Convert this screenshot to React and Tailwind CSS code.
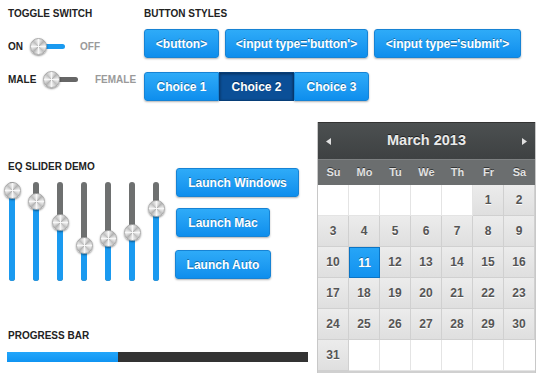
import React from "react";

const label = "text-[10px] font-bold leading-[12px] text-[#222]";
const knob =
  "w-[17px] h-[17px] rounded-full border border-[#a8a8a8] bg-[conic-gradient(#f7f7f7,#b3b3b3,#f7f7f7,#bfbfbf,#f7f7f7,#b3b3b3,#f7f7f7,#bfbfbf,#f7f7f7)] shadow-[0_1px_2px_rgba(0,0,0,0.45)]";
const btn =
  "h-[29px] rounded-[3px] border border-[#1783d4] bg-linear-to-b from-[#2eabf8] to-[#0d8eed] text-white text-[12px] font-bold leading-none [text-shadow:0_-1px_0_rgba(0,0,0,0.35)] shadow-[0_1px_2px_rgba(0,0,0,0.3)] flex items-center justify-center";

function Toggle({ on }) {
  return (
    <div className="relative w-[35px] h-[17px]">
      <div
        className={
          "absolute left-[8px] right-0 top-[6px] h-[5px] rounded-full " +
          (on ? "bg-[#1a9af0]" : "bg-[#666]")
        }
      />
      <div className={"absolute left-0 top-0 " + knob} />
    </div>
  );
}

const sliders = [8, 19, 40, 63, 56, 50, 26];

function Slider({ pos }) {
  return (
    <div className="relative w-[18px] h-[99px]">
      <div className="absolute left-[6px] w-[6px] top-0 bottom-0 rounded-full bg-[#6e7070]" />
      <div
        className="absolute left-[6px] w-[6px] bottom-0 rounded-b-full bg-[#1a9af0]"
        style={{ top: pos + "px" }}
      />
      <div className={"absolute left-[1px] " + knob} style={{ top: pos - 8 + "px" }} />
    </div>
  );
}

const days = [];
for (let i = 0; i < 5; i++) days.push(null);
for (let d = 1; d <= 31; d++) days.push(d);
while (days.length < 42) days.push(null);

function Arrow({ dir }) {
  return (
    <svg width="5" height="7" viewBox="0 0 5 7">
      {dir === "l" ? (
        <polygon points="5,0 5,7 0,3.5" fill="#e0e0e0" />
      ) : (
        <polygon points="0,0 0,7 5,3.5" fill="#e0e0e0" />
      )}
    </svg>
  );
}

export default function App() {
  return (
    <div className="w-[536px] h-[382px] bg-white overflow-hidden font-['Liberation_Sans',Arial,sans-serif]">
      {/* top */}
      <div className="flex h-[122px]">
        <div className="w-[144px] pl-[8px] pt-[8px]">
          <div className={label}>TOGGLE SWITCH</div>
          <div className="flex items-center mt-[18px] h-[17px]">
            <span className={label + " w-[14px]"}>ON</span>
            <div className="ml-[8px]">
              <Toggle on />
            </div>
            <span className="text-[10px] font-bold text-[#9a9a9a] ml-[15px]">OFF</span>
          </div>
          <div className="flex items-center mt-[16px] h-[17px]">
            <span className={label + " w-[27px]"}>MALE</span>
            <div className="ml-[8px]">
              <Toggle />
            </div>
            <span className="text-[10px] font-bold text-[#9a9a9a] ml-[17px]">FEMALE</span>
          </div>
        </div>
        <div className="pt-[8px]">
          <div className={label}>BUTTON STYLES</div>
          <div className="flex gap-[6px] mt-[9px]">
            <button className={btn + " w-[75px]"}>&lt;button&gt;</button>
            <button className={btn + " w-[143px]"}>&lt;input type='button'&gt;</button>
            <button className={btn + " w-[147px]"}>&lt;input type='submit'&gt;</button>
          </div>
          <div className="flex mt-[14px]">
            <button className={btn + " w-[75px] rounded-r-none"}>Choice 1</button>
            <button className="w-[75px] h-[29px] border border-[#073e78] bg-[#0b4f97] text-white text-[12px] font-bold leading-none [text-shadow:0_-1px_0_rgba(0,0,0,0.4)] shadow-[inset_0_1px_3px_rgba(0,0,0,0.4)] flex items-center justify-center">
              Choice 2
            </button>
            <button className={btn + " w-[75px] rounded-l-none"}>Choice 3</button>
          </div>
        </div>
      </div>

      {/* bottom */}
      <div className="flex">
        <div className="w-[317px]">
          <div className="flex items-start">
            <div className="w-[170px]">
              <div className={label + " pl-[8px] mt-[39px]"}>EQ SLIDER DEMO</div>
              <div className="flex gap-[6px] pl-[3px] mt-[9px]">
                {sliders.map((p, i) => (
                  <Slider key={i} pos={p} />
                ))}
              </div>
            </div>
            <div className="flex flex-col items-start mt-[46px] ml-[6px]">
              <button className={btn + " w-[123px]"}>Launch Windows</button>
              <button className={btn + " w-[94px] mt-[11px]"}>Launch Mac</button>
              <button className={btn + " w-[96px] mt-[13px] -ml-[1px]"}>Launch Auto</button>
            </div>
          </div>
          <div className={label + " pl-[8px] mt-[49px]"}>PROGRESS BAR</div>
          <div className="ml-[7px] mt-[10px] w-[301px] h-[10px] bg-[#333] flex">
            <div className="w-[111px] h-full bg-linear-to-b from-[#22a6fb] to-[#0f94f2]" />
          </div>
        </div>

        {/* calendar */}
        <div className="w-[219px] border-l border-r border-[#c8c8c8]">
          <div className="h-[37px] bg-linear-to-b from-[#4c5051] to-[#3e4142] border-t border-[#333] flex items-center justify-between px-[8px]">
            <Arrow dir="l" />
            <span className="text-[14.5px] font-bold text-[#eaeaea] [text-shadow:0_-1px_0_rgba(0,0,0,0.6)]">
              March 2013
            </span>
            <Arrow dir="r" />
          </div>
          <div className="h-[26px] bg-[#6b6e6f] border-t border-[#7d8081] grid grid-cols-7 items-center">
            {["Su", "Mo", "Tu", "We", "Th", "Fr", "Sa"].map((d) => (
              <span
                key={d}
                className="text-center text-[11px] font-bold text-[#e2e2e2] [text-shadow:0_-1px_0_rgba(0,0,0,0.5)]"
              >
                {d}
              </span>
            ))}
          </div>
          <div className="grid grid-cols-7 grid-rows-6 h-[188px] border-b-2 border-[#d0d0d0]">
            {days.map((d, i) =>
              d === null ? (
                <div key={i} className="border-r border-b border-[#e4e4e4] bg-white last:border-r-0" />
              ) : d === 11 ? (
                <div
                  key={i}
                  className="border border-[#0b74c4] bg-linear-to-b from-[#26a5f7] to-[#1192ef] flex items-center justify-center text-[12px] font-bold text-white [text-shadow:0_-1px_0_rgba(0,0,0,0.35)]"
                >
                  {d}
                </div>
              ) : (
                <div
                  key={i}
                  className="border-r border-b border-[#d0d0d0] bg-linear-to-b from-[#ececec] to-[#dfdfdf] flex items-center justify-center text-[12px] font-bold text-[#555] [text-shadow:0_1px_0_#fff]"
                >
                  {d}
                </div>
              )
            )}
          </div>
        </div>
      </div>
    </div>
  );
}
